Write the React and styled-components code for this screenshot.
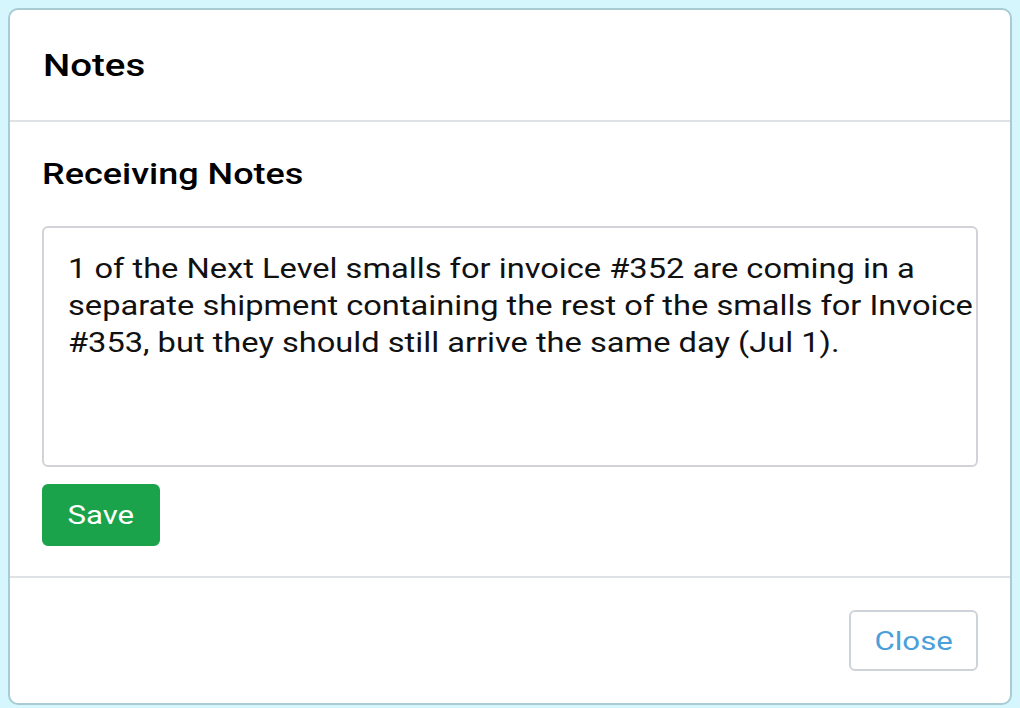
import React from 'react'
import styled, { createGlobalStyle } from 'styled-components'

// the whole screen was captured a little wide, so text gets stretched on x
const STRETCH = 1.2

const GlobalStyle = createGlobalStyle`
  html, body {
    margin: 0;
    padding: 0;
    background: #d5f6fd;
  }
  body {
    font-family: Roboto, "Liberation Sans", Arial, sans-serif;
    color: #000;
  }
`

const Page = styled.div`
  width: 1020px;
  height: 708px;
  padding: 8px 8px 3px 8px;
  box-sizing: border-box;
`

const Modal = styled.div`
  background: #fff;
  border: 2px solid #a9cbd3;
  border-radius: 10px;
  height: 100%;
  box-sizing: border-box;
  display: flex;
  flex-direction: column;
`

const Wide = styled.span`
  display: inline-block;
  transform: scaleX(${STRETCH});
  transform-origin: ${p => (p.$center ? 'center' : 'left center')};
`

const Header = styled.div`
  height: 112px;
  box-sizing: border-box;
  padding: 0 33px;
  display: flex;
  align-items: center;
  border-bottom: 2px solid #dee2e6;
`

const Title = styled.h5`
  margin: 0;
  font-size: 32px;
  font-weight: 500;
  line-height: 1.2;
`

const Body = styled.div`
  padding: 34px 32px 30px;
  border-bottom: 2px solid #dee2e6;
`

const Label = styled.h6`
  margin: 0 0 34px;
  font-size: 30px;
  font-weight: 500;
  line-height: 1.2;
`

const TextArea = styled.div`
  height: 241px;
  box-sizing: border-box;
  border: 2px solid #d2d3d8;
  border-radius: 6px;
  padding: 23px 0 23px 24px;
  font-size: 27.2px;
  line-height: 37px;
  color: #111;
`

const Copy = styled.div`
  width: calc(100% / ${STRETCH} + 20px);
  transform: scaleX(${STRETCH});
  transform-origin: left top;
`

const Button = styled.button`
  font-family: inherit;
  font-size: 26px;
  line-height: 1;
  border-radius: 6px;
  cursor: pointer;
  box-sizing: border-box;
  padding: 0;
  width: ${p => p.$w}px;
  height: ${p => p.$h}px;
  background: ${p => (p.$primary ? '#1aa34a' : '#fff')};
  color: ${p => (p.$primary ? '#fff' : '#4aa0da')};
  border: 2px solid ${p => (p.$primary ? '#1aa34a' : '#ced3da')};
`

const Actions = styled.div`
  margin-top: 17px;
`

const Footer = styled.div`
  flex: 1;
  display: flex;
  justify-content: flex-end;
  align-items: flex-start;
  padding: 32px 32px 0;
`

export default function App() {
  return (
    <Page>
      <GlobalStyle />
      <Modal>
        <Header>
          <Title><Wide>Notes</Wide></Title>
        </Header>
        <Body>
          <Label><Wide>Receiving Notes</Wide></Label>
          <TextArea>
            <Copy>
              1 of the Next Level smalls for invoice #352 are coming in a separate shipment containing the rest of the smalls for Invoice #353, but they should still arrive the same day (Jul 1).
            </Copy>
          </TextArea>
          <Actions>
            <Button $primary $w={118} $h={62}><Wide $center>Save</Wide></Button>
          </Actions>
        </Body>
        <Footer>
          <Button $w={129} $h={61}><Wide $center>Close</Wide></Button>
        </Footer>
      </Modal>
    </Page>
  )
}
